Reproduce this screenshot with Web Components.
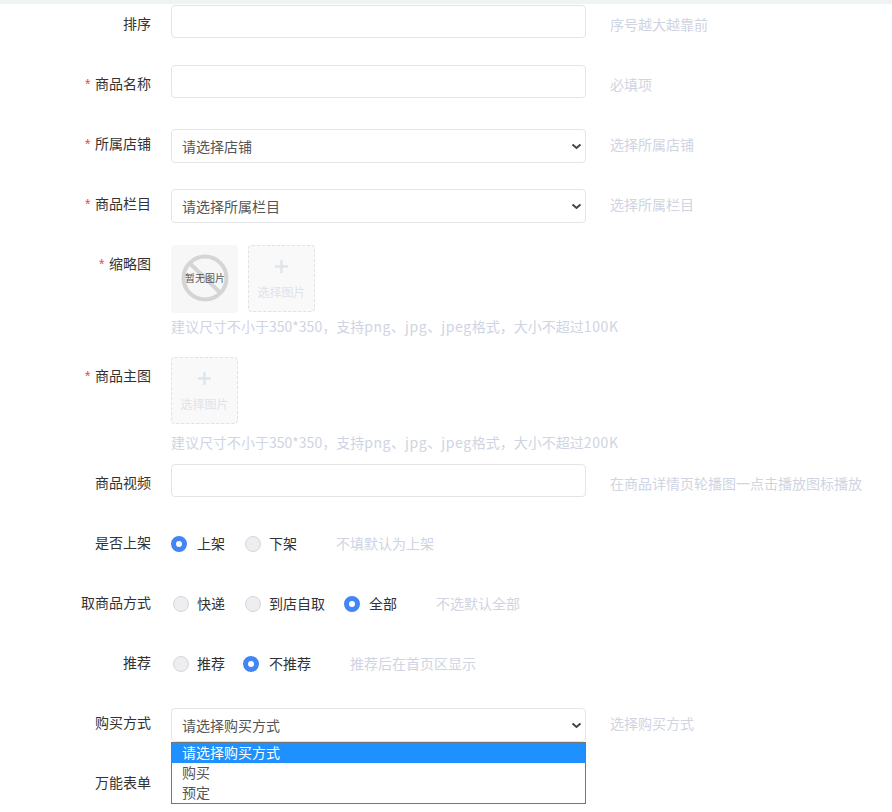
<!DOCTYPE html>
<html lang="zh-CN">
<head>
<meta charset="utf-8">
<title>商品编辑</title>
<style>
html, body { margin: 0; height: 812px; overflow: hidden; background: #fff; }
body { font: 14px/20px "Noto Sans CJK SC", sans-serif; color: #333; }
.top-strip { height: 4px; background: #f0f3f4; }
.form { padding-top: 1px; }
.en { letter-spacing: .6px; }
</style>
</head>
<body>
<div class="top-strip"></div>
<div class="form">
    <form-row label="排序">
        <text-field></text-field>
        <span slot="hint">序号越大越靠前</span>
    </form-row>
    <form-row label="商品名称" required>
        <text-field></text-field>
        <span slot="hint">必填项</span>
    </form-row>
    <form-row label="所属店铺" required>
        <select-field value="请选择店铺"></select-field>
        <span slot="hint">选择所属店铺</span>
    </form-row>
    <form-row label="商品栏目" required>
        <select-field value="请选择所属栏目"></select-field>
        <span slot="hint">选择所属栏目</span>
    </form-row>
    <form-row label="缩略图" required height="112" note-gap="3" stacked>
        <no-image></no-image>
        <upload-box></upload-box>
        <span slot="note">建议尺寸不小于350*350，支持<span class="en">png</span>、<span class="en">jpg</span>、<span class="en">jpeg</span>格式，大小不超过<span class="en">100K</span></span>
    </form-row>
    <form-row label="商品主图" required height="107" note-gap="7" stacked>
        <upload-box></upload-box>
        <span slot="note">建议尺寸不小于350*350，支持<span class="en">png</span>、<span class="en">jpg</span>、<span class="en">jpeg</span>格式，大小不超过<span class="en">200K</span></span>
    </form-row>
    <form-row label="商品视频">
        <text-field></text-field>
        <span slot="hint">在商品详情页轮播图一点击播放图标播放</span>
    </form-row>
    <form-row label="是否上架" inline>
        <radio-option checked>上架</radio-option>
        <radio-option>下架</radio-option>
        <span slot="hint">不填默认为上架</span>
    </form-row>
    <form-row label="取商品方式" inline>
        <radio-option>快递</radio-option>
        <radio-option>到店自取</radio-option>
        <radio-option checked style="--dot-left:-1px">全部</radio-option>
        <span slot="hint">不选默认全部</span>
    </form-row>
    <form-row label="推荐" inline>
        <radio-option>推荐</radio-option>
        <radio-option checked>不推荐</radio-option>
        <span slot="hint">推荐后在首页区显示</span>
    </form-row>
    <form-row label="购买方式">
        <select-field value="请选择购买方式" options="请选择购买方式,购买,预定"></select-field>
        <span slot="hint">选择购买方式</span>
    </form-row>
    <form-row label="万能表单"></form-row>
</div>

<script>
/** 表单行：左侧标签，右侧控件 + 提示 */
class FormRow extends HTMLElement {
    connectedCallback() {
        const height = this.getAttribute('height') || 60;
        const noteGap = this.getAttribute('note-gap') || 4;
        const star = this.hasAttribute('required') ? '<i>*</i>' : '';
        this.attachShadow({ mode: 'open' }).innerHTML = `
<style>
:host { display: flex; height: ${height}px; }
.label { width: 151px; padding-top: 8px; text-align: right; flex-shrink: 0; height: 20px; white-space: nowrap; }
.label i { color: #f5453d; font: normal 14px/20px "Liberation Sans", sans-serif; margin-right: 4.500px; }
.main { margin-left: 20px; }
.line { display: flex; }
.controls { display: flex; width: 415px; flex-shrink: 0; }
.hint { margin-left: 24px; padding-top: 9px; color: #cfd4e2; white-space: nowrap; }
.note { margin-top: ${noteGap}px; color: #cfd4e2; white-space: nowrap; }
:host([stacked]) .controls { gap: 10px; height: 68px; }
:host([stacked]) .hint { display: none; }
:host([inline]) .controls { width: auto; padding: 11px 0 0 2px; height: 18px; gap: 20px; }
:host([inline]) .hint { margin-left: 39px; }
:host(:not([stacked])) .note { display: none; }
</style>
<div class="label">${star}${this.getAttribute('label')}</div>
<div class="main">
    <div class="line">
        <div class="controls"><slot></slot></div>
        <div class="hint"><slot name="hint"></slot></div>
    </div>
    <div class="note"><slot name="note"></slot></div>
</div>`;
    }
}

class TextField extends HTMLElement {
    connectedCallback() {
        this.attachShadow({ mode: 'open' }).innerHTML = `
<style>
:host { display: block; width: 415px; height: 33px; box-sizing: border-box; border: 1px solid #e2e5e8; border-radius: 4px; background: #fff; }
</style>`;
    }
}

class SelectField extends HTMLElement {
    connectedCallback() {
        const options = (this.getAttribute('options') || '').split(',').filter(Boolean);
        const list = options.length
            ? `<div class="menu">${options.map((o, i) => `<div class="opt${i === 0 ? ' on' : ''}">${o}</div>`).join('')}</div>`
            : '';
        this.attachShadow({ mode: 'open' }).innerHTML = `
<style>
:host { display: block; position: relative; width: 415px; height: 34px; margin-top: 4px; box-sizing: border-box; border: 1px solid #e2e5e8; border-radius: 4px; background: #fff; }
.value { padding: 6px 0 0 10px; color: #555; }
svg { position: absolute; right: 3px; top: 12px; width: 12px; height: 9px; }
.menu { position: absolute; left: -1px; top: 33px; width: 415px; box-sizing: border-box; height: 62px; border: 1px solid #767676; background: #fff; z-index: 2; }
.opt { height: 20px; padding-left: 10px; color: #555; line-height: 18px; }
.opt.on { background: #1e90ff; color: #fff; }
</style>
<div class="value">${this.getAttribute('value')}</div>
<svg viewBox="0 0 12 9"><polyline points="2.500 2.500 6.500 6 10.500 2.500" fill="none" stroke="#444" stroke-width="2"/></svg>
${list}`;
    }
}

class UploadBox extends HTMLElement {
    connectedCallback() {
        this.attachShadow({ mode: 'open' }).innerHTML = `
<style>
:host { display: block; width: 67px; height: 67px; box-sizing: border-box; border: 1px dashed #e0e2e4; border-radius: 4px; background: #f9f9f9; text-align: center; color: #dfe3e9; font-size: 12px; line-height: 16px; }
svg { display: block; width: 13px; height: 13px; margin: 14px auto 11px; }
</style>
<svg viewBox="0 0 13 13"><path d="M6.5 0v13M0 6.500h13" stroke="#dfe5ec" stroke-width="2.400"/></svg>
<div>选择图片</div>`;
    }
}

class NoImage extends HTMLElement {
    connectedCallback() {
        this.attachShadow({ mode: 'open' }).innerHTML = `
<style>
:host { display: block; position: relative; width: 67px; height: 68px; border-radius: 4px; background: #f7f7f7; }
svg { position: absolute; left: 10px; top: 9px; width: 48px; height: 48px; }
span { position: absolute; left: 1px; right: 0; top: 26px; text-align: center; font-size: 10px; line-height: 14px; color: #555; }
</style>
<svg viewBox="0 0 48 48" fill="none" stroke="#d5d5d5" stroke-width="4"><circle cx="24" cy="24" r="21.500"/><path d="M8.500 9l31 30"/></svg>
<span>暂无图片</span>`;
    }
}

class RadioOption extends HTMLElement {
    connectedCallback() {
        this.attachShadow({ mode: 'open' }).innerHTML = `
<style>
:host { display: block; position: relative; padding-left: 24px; height: 18px; white-space: nowrap; line-height: 16px; }
.dot { position: absolute; left: 0; top: 1px; width: 16px; height: 16px; box-sizing: border-box; border-radius: 50%; border: 1px solid #d3d6e0; background: #eeeef0; }
:host([checked]) .dot { left: var(--dot-left, -2px); border: 5px solid #4285f4; background: #fff; }
</style>
<span class="dot"></span><slot></slot>`;
    }
}

customElements.define('form-row', FormRow);
customElements.define('text-field', TextField);
customElements.define('select-field', SelectField);
customElements.define('upload-box', UploadBox);
customElements.define('no-image', NoImage);
customElements.define('radio-option', RadioOption);
</script>
</body>
</html>
